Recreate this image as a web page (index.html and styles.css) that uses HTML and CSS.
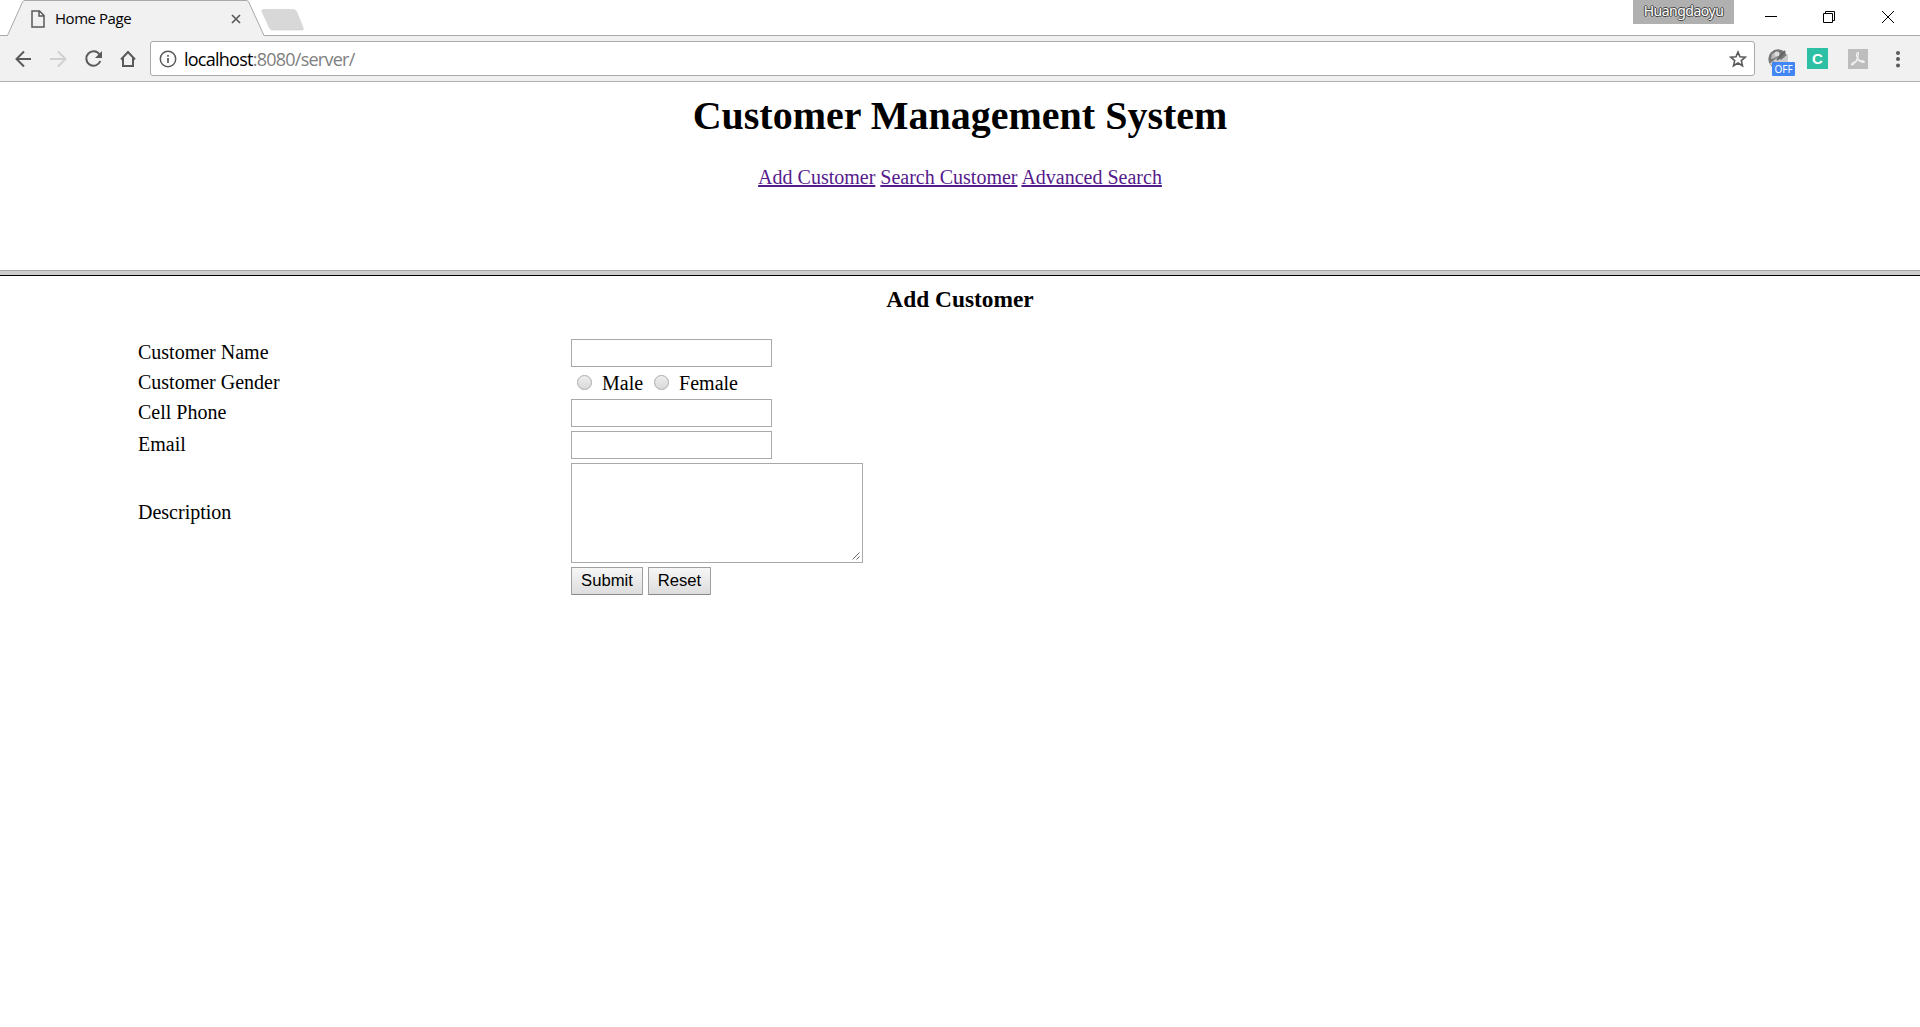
FILE: index.html
```html
<!DOCTYPE html>
<html lang="en">
<head>
<meta charset="utf-8">
<title>Home Page</title>
<link rel="stylesheet" href="styles.css">
</head>
<body>
<header class="browser">
  <div class="tabstrip">
    <div class="tab">
      <svg class="tab-shape" width="266" height="36" viewBox="0 0 266 36"><path d="M7.500 36L22.500 2Q23.300 .5 25 .5H246Q248 .5 248.700 2L264 36Z" fill="#f1f1f1"/><path d="M0 35.500H7.500L22.500 2Q23.300 .5 25 .5H246Q248 .5 248.700 2L264 35.500" fill="none" stroke="#a9a9a9"/></svg>
      <svg class="page-icon" width="14" height="18" viewBox="0 0 14 18"><path d="M1 1H8.500L13 5.500V17H1ZM8 1V6H13" fill="none" stroke="#5a5a5a" stroke-width="1.500"/></svg>
      <span class="tab-title">Home Page</span>
      <svg class="tab-close" width="10" height="10" viewBox="0 0 10 10"><path d="M1 1L9 9M9 1L1 9" stroke="#5a5a5a" stroke-width="1.700"/></svg>
    </div>
    <svg class="new-tab" width="44" height="22" viewBox="0 0 44 22"><path d="M2.500 .5H32Q34.500 .5 35.500 2.500L42 18.500Q43 21 41 21H11.500Q9.500 21 8.500 19L1 2.500Q.3 .5 2.500 .5Z" fill="#d8d8d8" stroke="#cecece" stroke-width=".6"/></svg>
    <span class="profile">Huangdaoyu</span>
    <svg class="window-controls" width="132" height="14" viewBox="0 0 132 14" fill="none" stroke="#000" stroke-width="1"><path d="M0 6.500H12M58.500 3.500H67.500V12.500H58.500ZM60.500 3V1.500H69.500V10.500H68M117 1L129 13M129 1L117 13"/></svg>
  </div>
  <div class="toolbar">
    <svg class="nav-icons" width="122" height="20" viewBox="0 0 122 20" fill="none" stroke="#5a5a5a" stroke-width="2"><path d="M16 10H2M9 2.500L1.500 10L9 17.500"/><path d="M35 10H50M43 2.500L50.500 10L43 17.500" stroke="#d0d0d0"/><path d="M84.500 5.500A7.200 7.200 0 1 0 85.300 12"/><path d="M87 2V9H80Z" fill="#5a5a5a" stroke="none"/><path d="M106 10.500L113 3L120 10.500M108 9V17H118V9"/></svg>
    <div class="address">
      <svg width="18" height="18" viewBox="0 0 18 18"><circle cx="9" cy="9" r="7.700" fill="none" stroke="#5a5a5a" stroke-width="1.500"/><path d="M9 8V13M9 5V6.700" stroke="#5a5a5a" stroke-width="1.700"/></svg>
      <span class="url">localhost<span class="path">:8080/server/</span></span>
      <svg class="star" width="18" height="18" viewBox="0 0 18 18"><path d="M9 2L11 6.800L16.300 7.200L12.300 10.600L13.500 15.800L9 13L4.500 15.800L5.700 10.600L1.700 7.200L7 6.800Z" fill="none" stroke="#5a5a5a" stroke-width="1.600"/></svg>
    </div>
    <div class="ext-off">
      <svg width="21" height="20" viewBox="0 0 21 20"><circle cx="10" cy="10" r="9.700" fill="#777"/><path d="M1 15L10 8L13 11L20 5V14L12 19Z" fill="#ccc"/><path d="M4 5L8 3L10 6L7 9L3 10Z" fill="#bbb"/><circle cx="9" cy="5" r="2.500" fill="#ddd"/><path d="M9 11L17 2M5 13L10 17" stroke="#666" stroke-width="2"/></svg>
      <span class="badge">OFF</span>
    </div>
    <span class="ext-c">C</span>
    <svg class="ext-pdf" width="20" height="20" viewBox="0 0 20 20"><path d="M0 0H20V20H0Z" fill="#bdbdbd"/><path d="M9 4C11 2 11 7 8.500 11C6.500 15 3.500 17 3.500 15.500C3.500 13 12 10.500 15.500 12C18 13.500 14 14.500 11 11C8.500 8 8 5.500 9 4Z" fill="none" stroke="#f2f2f2" stroke-width="1.200"/></svg>
    <svg class="menu" width="6" height="18" viewBox="0 0 6 18" fill="#5a5a5a"><circle cx="3" cy="3" r="2"/><circle cx="3" cy="9" r="2"/><circle cx="3" cy="15.500" r="2"/></svg>
  </div>
</header>
<section class="top-frame">
  <h1>Customer Management System</h1>
  <nav><a href="#">Add Customer</a> <a href="#">Search Customer</a> <a href="#">Advanced Search</a></nav>
</section>
<main>
  <h3>Add Customer</h3>
  <form class="form">
    <label>Customer Name</label><input class="text" type="text">
    <label>Customer Gender</label>
    <div class="gender"><input type="radio" name="gender"><span>Male</span><input type="radio" name="gender"><span>Female</span></div>
    <label>Cell Phone</label><input class="text" type="text">
    <label>Email</label><input class="text" type="text">
    <label>Description</label>
    <div class="area"><textarea></textarea><svg class="grip" width="8" height="8" viewBox="0 0 8 8"><path d="M.5 7.500L7.500 .5M4.500 7.500L7.500 4.500" stroke="#555" stroke-width=".9"/></svg></div>
    <span></span>
    <div class="actions"><button class="submit" type="button">Submit</button><button class="reset" type="button">Reset</button></div>
  </form>
</main>
</body>
</html>
```
FILE: styles.css
```css
* { box-sizing: border-box; }
body { margin: 0; background: #fff; color: #000; font: 20px/23px "Liberation Serif", serif; height: 1027px; overflow: hidden; }
svg { display: block; flex: none; }

/* Browser chrome */
.tabstrip { height: 36px; display: flex; align-items: flex-start; background: linear-gradient(#a9a9a9, #a9a9a9) 0 35px / 100% 1px no-repeat; }
.tab { position: relative; width: 264px; height: 36px; flex: none; display: flex; padding-left: 31px; }
.tab-shape { position: absolute; left: 0; top: 0; }
.page-icon { position: relative; margin-top: 10px; }
.tab-title { position: relative; margin: 6px 0 0 10px; width: 176px; font: 15px/24px "Open Sans", sans-serif; letter-spacing: -.45px; }
.tab-close { position: relative; margin-top: 14px; }
.new-tab { margin: 9px 0 0 -3px; }
.profile { margin-left: 1328px; width: 101px; height: 24px; flex: none; background: #b0b0b0; color: #fff; text-align: center; font: 14px/22px "Noto Sans", sans-serif; letter-spacing: -.5px; text-shadow: 1px 0 #444, -1px 0 #444, 0 1px #444, 0 -1px #444; }
.window-controls { margin: 10px 0 0 31px; }
.toolbar { height: 46px; display: flex; align-items: flex-start; background: #f1f1f1; border-bottom: 1px solid #b0b0b0; }
.nav-icons { margin: 13px 0 0 15px; }
.address { width: 1605px; height: 35px; margin: 5px 0 0 13px; padding: 0 7px 0 8px; display: flex; align-items: center; flex: none; background: #fff; border: 1px solid #a9a9a9; border-radius: 3px; }
.url { flex: 1; margin-left: 7px; font: 18px/30px "Open Sans", sans-serif; letter-spacing: -.75px; }
.path { color: #808080; }
.ext-off { position: relative; margin: 13px 0 0 13px; width: 21px; height: 20px; }
.badge { position: absolute; left: 4px; top: 13px; width: 23px; height: 14px; background: #4285f4; color: #fff; border-radius: 1px; font: 10px/15px "Noto Sans", sans-serif; text-align: center; }
.ext-c { margin: 12px 0 0 18px; width: 21px; height: 21px; background: #2dc0a5; color: #fff; font: bold 15px/21px "Liberation Sans", sans-serif; text-align: center; }
.ext-pdf { margin: 13px 0 0 20px; }
.menu { margin: 14px 0 0 27px; }

/* Upper frame with its divider */
.top-frame { height: 194px; overflow: hidden; text-align: center; background: linear-gradient(#a9a9a9 0 1px, #ccc 1px 5px, #000 5px 6px) 0 188px / 100% 6px no-repeat; }
h1 { margin: 11px 0 27px; font-size: 40px; line-height: 46px; }
a { color: #551a8b; text-decoration: underline 2px; text-underline-offset: 1px; text-decoration-skip-ink: none; }

/* Customer form */
main { text-align: center; }
h3 { margin: 10px 0 0; font-size: 23.4px; line-height: 27px; }
.form { margin: 26px 0 0 138px; display: grid; grid-template-columns: 433px 1fr; grid-template-rows: 28px 24px 28px 28px 100px 28px; row-gap: 4px; text-align: left; align-items: center; }
label { padding-bottom: 2px; }
.text { width: 201px; height: 28px; margin: 0; border: 1px solid #a9a9a9; background: #fff; }
.gender { display: flex; align-items: center; padding-left: 6px; }
.gender input { appearance: none; width: 15px; height: 15px; margin: 0 0 1px; border: 1px solid #aaa; border-radius: 50%; background: linear-gradient(#eee, #d9d9d9); }
.gender span { margin: 1px 11px 0 10px; }
.area { position: relative; width: 292px; height: 100px; }
textarea { display: block; width: 292px; height: 100px; margin: 0; border: 1px solid #a9a9a9; resize: none; }
.grip { position: absolute; right: 3px; bottom: 3px; }
.actions { display: flex; gap: 5px; }
button { height: 28px; padding: 0; border: 1px solid #a0a0a0; border-bottom-color: #888; border-radius: 1px; background: linear-gradient(#f6f6f6, #ddd); color: #000; font: 16.67px/22px "Liberation Sans", sans-serif; }
.submit { width: 72px; }
.reset { width: 63px; }
```
